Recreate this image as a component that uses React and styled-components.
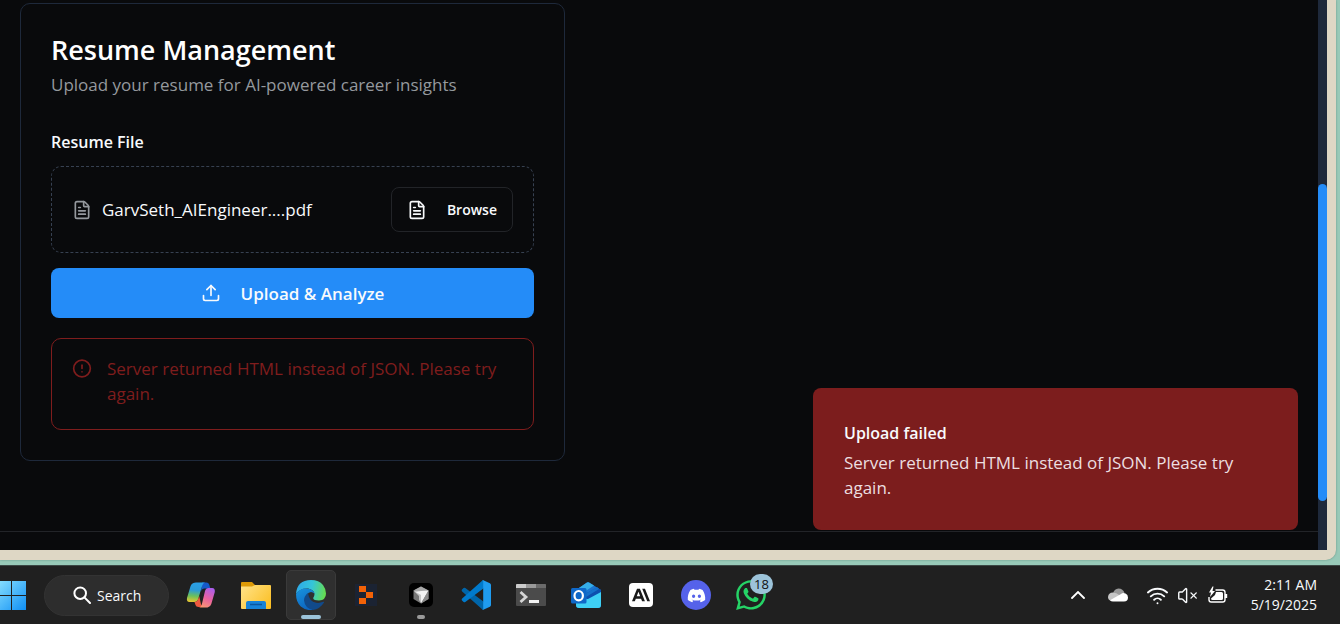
import React from "react";
import styled, { createGlobalStyle } from "styled-components";
import { FileText, Upload, CircleAlert, Wifi, VolumeX } from "lucide-react";
import { FaDiscord, FaWhatsapp } from "react-icons/fa";
import { SiAnthropic } from "react-icons/si";

const GlobalStyle = createGlobalStyle`
  *, *::before, *::after { box-sizing: border-box; }
  body {
    margin: 0;
    font-family: "Segoe UI", "Open Sans", "Noto Sans", sans-serif;
    color: #f8fafc;
    background: #98c9b8;
  }
  button, input { font: inherit; color: inherit; }
  h1, h2, p, ul { margin: 0; padding: 0; }
  svg { display: block; flex: none; }
`;

const Desktop = styled.div`
  display: flex;
  flex-direction: column;
  min-height: 100vh;
`;

const BrowserWindow = styled.div`
  display: flex;
  flex: 1;
  margin: 0 4px 5px 0;
  padding: 0 9px 10px 0;
  background: #ded7c5;
  border-bottom-right-radius: 10px;
  box-shadow: 0 0 2px rgba(40, 80, 70, 0.5);
`;

const Page = styled.div`
  position: relative;
  display: flex;
  flex: 1;
  flex-direction: column;
  background: #090a0c;
`;

const Main = styled.main`
  flex: 1;
  padding: 3px 20px 70px;
`;

const PageFooter = styled.footer`
  height: 19px;
  border-top: 1px solid #222428;
`;

const Card = styled.section`
  max-width: 545px;
  padding: 30px;
  border: 1px solid #1e293b;
  border-radius: 10px;
`;

const CardHeader = styled.header`
  display: grid;
  gap: 6px;
  margin-bottom: 30px;
`;

const CardTitle = styled.h1`
  font-size: 27px;
  font-weight: 600;
  line-height: 32px;
  color: #fff;
`;

const CardSubtitle = styled.p`
  font-size: 17px;
  line-height: 26px;
  color: #95999e;
`;

const FieldLabel = styled.label`
  display: block;
  margin-bottom: 10px;
  font-size: 16px;
  font-weight: 600;
  line-height: 28px;
`;

const FilePicker = styled.div`
  display: flex;
  align-items: center;
  justify-content: space-between;
  padding: 20px;
  border: 1px dashed #374151;
  border-radius: 10px;
`;

const FileName = styled.span`
  display: flex;
  align-items: center;
  gap: 10px;
  font-size: 17px;
  line-height: 26px;

  svg { color: #95999e; }
`;

const HiddenFile = styled.input`
  display: none;
`;

const BrowseButton = styled.button`
  display: flex;
  align-items: center;
  gap: 20px;
  height: 45px;
  padding: 0 15px;
  border: 1px solid #222428;
  border-radius: 8px;
  background: transparent;
  font-size: 14px;
  font-weight: 600;
  cursor: pointer;
`;

const UploadButton = styled.button`
  display: flex;
  align-items: center;
  justify-content: center;
  gap: 20px;
  width: 100%;
  height: 50px;
  margin: 15px 0 20px;
  padding: 0;
  border: 0;
  border-radius: 8px;
  background: #248cf8;
  font-size: 17px;
  font-weight: 600;
  cursor: pointer;
`;

const ErrorAlert = styled.div`
  display: flex;
  gap: 15px;
  padding: 17px 20px 23px;
  border: 1px solid #7f1d1d;
  border-radius: 10px;
  color: #7f1d1d;
  font-size: 17px;
  line-height: 25px;

  svg { height: 25px; }
`;

const Toast = styled.aside`
  position: absolute;
  right: 20px;
  bottom: 20px;
  width: 485px;
  padding: 32px 31px 30px;
  border-radius: 8px;
  background: #7c1d1d;
`;

const ToastTitle = styled.h2`
  margin-bottom: 4px;
  font-size: 16px;
  font-weight: 600;
  line-height: 26px;
`;

const ToastText = styled.p`
  font-size: 17px;
  line-height: 25px;
  color: #ecdfe0;
`;

const ScrollTrack = styled.div`
  display: grid;
  grid-template-rows: 184fr 317fr 49fr;
  width: 9px;
  background: #1e293b;
`;

const ScrollThumb = styled.div`
  grid-row: 2;
  border-radius: 5px;
  background: #248cf8;
`;

const Taskbar = styled.nav`
  display: flex;
  align-items: center;
  justify-content: space-between;
  height: 59px;
  padding-right: 23px;
  border-top: 1px solid #3b4744;
  background: #202020;
`;

const TaskbarGroup = styled.div`
  display: flex;
  align-items: center;
`;

const BareButton = styled.button`
  display: grid;
  place-items: center;
  padding: 0;
  border: 0;
  background: none;
`;

const SearchBox = styled.button`
  display: flex;
  align-items: center;
  gap: 6px;
  width: 125px;
  height: 41px;
  margin: 0 7px 0 18px;
  padding: 0 0 0 28px;
  border: 1px solid #333;
  border-radius: 21px;
  background: #2d2d2d;
  font-size: 14px;
`;

const AppList = styled.div`
  display: flex;
  gap: 5px;
`;

const AppButton = styled.button`
  position: relative;
  display: grid;
  place-items: center;
  width: 50px;
  height: 50px;
  padding: 0;
  border: 1px solid ${(p) => (p.$active ? "#3a3a3a" : "transparent")};
  border-radius: 5px;
  background: ${(p) => (p.$active ? "#2f2f2f" : "transparent")};
`;

const RunningMark = styled.span`
  position: absolute;
  bottom: 0;
  width: ${(p) => (p.$wide ? 20 : 8)}px;
  height: 4px;
  border-radius: 2px;
  background: ${(p) => (p.$wide ? "#9cc3d9" : "#9a9a9a")};
`;

const CountBadge = styled.span`
  position: absolute;
  top: 3px;
  right: 2px;
  width: 23px;
  height: 20px;
  border-radius: 10px;
  background: #9cc3d9;
  color: #111;
  font-size: 13px;
  line-height: 20px;
`;

const LogoTile = styled.span`
  display: grid;
  place-items: center;
  width: ${(p) => p.$size}px;
  height: ${(p) => p.$size}px;
  border-radius: ${(p) => p.$radius}px;
  background: ${(p) => p.$fill};
  color: ${(p) => p.$ink};
`;

const TrayButton = styled(BareButton)`
  width: ${(p) => (p.$wide ? 50 : 30)}px;
  height: 40px;
`;

const Clock = styled.time`
  margin-left: 18px;
  font-size: 14px;
  line-height: 20px;
  text-align: right;
`;

const StartLogo = () => (
  <svg width="26" height="30" viewBox="0 0 26 30" aria-hidden="true">
    <defs>
      <linearGradient id="start" x1="-4" y1="0" x2="26" y2="30" gradientUnits="userSpaceOnUse">
        <stop offset="0" stopColor="#8fe4ff" />
        <stop offset="1" stopColor="#0f8ff5" />
      </linearGradient>
    </defs>
    <path d="M0 1h11v14H0zM12 1h14v14H12zM0 16h11v14H0zM12 16h14v14H12z" fill="url(#start)" />
  </svg>
);

const SearchIcon = () => (
  <svg width="18" height="18" viewBox="0 0 18 18" fill="none" stroke="#fff" strokeWidth="2" aria-hidden="true">
    <circle cx="7.2" cy="7.2" r="5.8" />
    <path d="m11.4 11.4 5.6 5.6" strokeLinecap="round" />
  </svg>
);

const CopilotLogo = () => (
  <svg width="30" height="28" viewBox="0 0 30 28" aria-hidden="true">
    <defs>
      <linearGradient id="cpA" x1="8" y1="1" x2="6" y2="21" gradientUnits="userSpaceOnUse">
        <stop offset="0" stopColor="#2aa0e8" />
        <stop offset=".4" stopColor="#2b9bd8" />
        <stop offset=".7" stopColor="#6cc05b" />
        <stop offset="1" stopColor="#e9c630" />
      </linearGradient>
      <linearGradient id="cpB" x1="24" y1="6" x2="14" y2="27" gradientUnits="userSpaceOnUse">
        <stop offset="0" stopColor="#a75df0" />
        <stop offset=".5" stopColor="#e9629f" />
        <stop offset="1" stopColor="#ffa06a" />
      </linearGradient>
    </defs>
    <path d="M16 1.500h4.500q2 0 2.700 2l1.200 4H18q-2 0-2.800 2.500z" fill="#1559c9" />
    <path d="M7.500 2Q8.300 1.500 10 1.500h9q-2 .5-2.800 3l-4 13.500q-.9 3-3.700 3H3.500Q.3 21 1 17L4.600 5q.9-2.600 2.900-3z" fill="url(#cpA)" />
    <path d="M8.500 21q2.800 0 3.700-3l1-3 1.500 7q.5 3.500 2.300 4h-4.500q-2.500 0-3-2z" fill="#ef5940" />
    <path d="M22.500 26q-.8.500-2.500.5h-7q2-.5 2.800-3L19 10q.9-3 3.500-3h3.700q3 .2 2.600 4l-3.500 12q-.9 2.500-2.800 3z" fill="url(#cpB)" />
  </svg>
);

const ExplorerLogo = () => (
  <svg width="30" height="28" viewBox="0 0 30 28" aria-hidden="true">
    <defs>
      <linearGradient id="folder" x1="0" y1="4" x2="30" y2="28" gradientUnits="userSpaceOnUse">
        <stop offset="0" stopColor="#ffe38a" />
        <stop offset="1" stopColor="#fbbd1e" />
      </linearGradient>
    </defs>
    <path d="M0 2q0-1 1-1h10l3 3h15v8H0z" fill="#dd9a07" />
    <path d="M0 5.500h11L14 4h15q1 0 1 1v22q0 1-1 1H1q-1 0-1-1z" fill="url(#folder)" />
    <path d="M5 28v-6q0-2 2-2h16q2 0 2 2v6z" fill="#1683d8" />
    <path d="M9 23.500h12" stroke="#0b579e" strokeWidth="1.500" />
  </svg>
);

const EdgeLogo = () => (
  <svg width="30" height="30" viewBox="0 0 30 30" aria-hidden="true">
    <defs>
      <linearGradient id="edTop" x1="1" y1="8" x2="29" y2="14" gradientUnits="userSpaceOnUse">
        <stop offset="0" stopColor="#2eabe8" />
        <stop offset=".5" stopColor="#35c5d8" />
        <stop offset="1" stopColor="#65dc50" />
      </linearGradient>
      <linearGradient id="edLow" x1="2" y1="9" x2="14" y2="30" gradientUnits="userSpaceOnUse">
        <stop offset="0" stopColor="#1791dc" />
        <stop offset="1" stopColor="#0c61bd" />
      </linearGradient>
    </defs>
    <path d="M0 14Q1 0 15 0q8 0 12 5 3 4 3 8.500 0 6.500-7 7-5.500 0-5.800-2.200c0-1.200 1.300-1.800 1.300-4.300 0-3-3.500-5.500-8-5.500Q4 8.500 0 14z" fill="url(#edTop)" />
    <path d="M0 14Q4 8 10.500 8.500c4.500.3 8 2.500 8 5.500-.5-1-2-2-3.500-2q-5 1-5 7 0 7 7 10.900Q10 31 4.800 26.500 0 22 0 14z" fill="url(#edLow)" />
    <path d="M12 13q-4 3-4 7.500 1 8 9 9.400 7-.8 11-7.400.3-1-.8-.7-3.200 1.500-7 1-7-1-8.200-9.800z" fill="#114a8b" />
  </svg>
);

const PixelArrowLogo = () => (
  <svg width="22" height="22" viewBox="0 0 22 22" aria-hidden="true">
    <path d="M0 0h22v22H0z" fill="#1b2333" />
    <path d="M4 2h7v6H4zM11 8h7v6h-7zM4 14h7v6H4z" fill="#f26207" />
  </svg>
);

const CursorLogo = () => (
  <svg width="24" height="24" viewBox="0 0 24 24" aria-hidden="true">
    <rect width="24" height="24" rx="5" fill="#000" />
    <path d="m12 3.500 7.500 4v8.500L12 20.500 4.500 16V7.500z" fill="#777" />
    <path d="m12 3.500 7.500 4L12 9 4.500 7.500z" fill="#a8a8a8" />
    <path d="m4.500 7.500 7.500 4V20l-2-3v-4z" fill="#c4c4c4" />
    <path d="m5.500 8.500 14-1L12 20.500V12z" fill="#f2f2f2" />
    <path d="M12 20.500 19.500 7.500V16z" fill="#8b8b8b" />
  </svg>
);

const VsCodeLogo = () => (
  <svg width="30" height="30" viewBox="0 0 30 30" aria-hidden="true">
    <path d="m1 9.600 1.600-1.500q.8-.7 1.700 0L25 23.500 22 30 .900 11.200q-.6-.9.100-1.600z" fill="#0065a9" />
    <path d="m1 20.400 1.600 1.500q.8.700 1.700 0L25 6.500 22 0 .900 18.800q-.6.900.1 1.600z" fill="#007acc" />
    <path d="M22.300 29.800q-.9.300-1.600-.4 1.500 1 1.500-1.200V1.800q0-2.200-1.500-1.200.7-.7 1.600-.4l6.600 3Q30 3.700 30 5v20q0 1.300-1.100 1.800z" fill="#1f9cf0" />
  </svg>
);

const TerminalLogo = () => (
  <svg width="30" height="22" viewBox="0 0 30 22" aria-hidden="true">
    <rect width="30" height="22" rx="1" fill="#4b4b4b" />
    <path d="M0 1q0-1 1-1h9v4H0z" fill="#ccc" />
    <path d="M10 0h10v4H10z" fill="#999" />
    <path d="M20 0h9q1 0 1 1v3H20z" fill="#6b6b6b" />
    <path d="m4.500 8 5.500 5-5.500 5" fill="none" stroke="#d6d6d6" strokeWidth="2.800" />
    <path d="M13 16h10v3H13z" fill="#f4f4f4" />
  </svg>
);

const OutlookLogo = () => (
  <svg width="30" height="26" viewBox="0 0 30 26" aria-hidden="true">
    <path d="M5 8 16 .5q1-.6 2 0L30 8v15q0 3-3 3H8q-3 0-3-3z" fill="#1c75d0" />
    <path d="M5 8 16 .5q1-.6 2 0l5 3L10 12z" fill="#35aee8" />
    <path d="M12 13 26 5.500 30 8v3L17 18z" fill="#0d4fae" />
    <path d="M5 17l12 0 13-7v13q0 3-3 3H8q-3 0-3-3z" fill="#3ed0f5" />
    <path d="M14 12 26 5l2 2-13 8z" fill="#1570c9" />
    <rect y="6" width="15.500" height="15.500" rx="1.500" fill="#0f68c8" />
    <ellipse cx="7.700" cy="13.700" rx="4.200" ry="4.700" fill="none" stroke="#fff" strokeWidth="2.200" />
  </svg>
);

const ChevronUpIcon = () => (
  <svg width="14" height="8" viewBox="0 0 14 8" aria-hidden="true">
    <path d="m1 7 6-6 6 6" fill="none" stroke="#fff" strokeWidth="1.800" strokeLinecap="round" />
  </svg>
);

const CloudIcon = () => (
  <svg width="20" height="14" viewBox="0 0 20 14" aria-hidden="true">
    <path d="M5 5.500Q6 1 10.500.5q4.500 0 6 4.500L11 8z" fill="#9a9a9a" />
    <path d="M0 9q.4-4.500 5-4.500Q8 4.500 12 7.500L3 12.800Q0 12 0 9z" fill="#c6c6c6" />
    <path d="M2 12.300 13 6q2-1.600 4.500-.5 2.500 1.200 2.500 4 0 4-4 4H5q-2 0-3-1.200z" fill="#fff" />
  </svg>
);

const BatteryIcon = () => (
  <svg width="20" height="18" viewBox="0 0 20 18" fill="none" stroke="#fff" strokeWidth="1.400" aria-hidden="true">
    <path d="M7.500 4h7.200q2.300 0 2.300 2.300v7.400q0 2.300-2.300 2.300H3.200Q1 16 1 13.700V11" />
    <path d="M8 6h5.500q1.500 0 1.500 1.500v5q0 1.500-1.500 1.500H4.500Q3 14 3 12.500L7 9z" fill="#fff" stroke="none" />
    <path d="M18 8v4" strokeWidth="2.400" />
    <path d="M4.500.5 1 6.500h2L2 11l5-6H4.500l1-4.500z" fill="#fff" stroke="none" />
  </svg>
);

const AnthropicTile = () => (
  <LogoTile $size={24} $radius={4} $fill="#fff" $ink="#191919">
    <SiAnthropic size={18} />
  </LogoTile>
);

const DiscordTile = () => (
  <LogoTile $size={30} $radius={15} $fill="#5562ea" $ink="#fff">
    <FaDiscord size={19} />
  </LogoTile>
);

const WhatsAppLogo = () => <FaWhatsapp size={34} color="#25d366" />;

const APPS = [
  { name: "Copilot", Logo: CopilotLogo },
  { name: "File Explorer", Logo: ExplorerLogo },
  { name: "Microsoft Edge", Logo: EdgeLogo, active: true },
  { name: "Replit", Logo: PixelArrowLogo },
  { name: "Cursor", Logo: CursorLogo, running: true },
  { name: "Visual Studio Code", Logo: VsCodeLogo },
  { name: "Terminal", Logo: TerminalLogo },
  { name: "Outlook", Logo: OutlookLogo },
  { name: "Claude", Logo: AnthropicTile },
  { name: "Discord", Logo: DiscordTile },
  { name: "WhatsApp", Logo: WhatsAppLogo, count: 18 },
];

const ERROR_TEXT = "Server returned HTML instead of JSON. Please try again.";

function ResumeCard() {
  return (
    <Card>
      <CardHeader>
        <CardTitle>Resume Management</CardTitle>
        <CardSubtitle>Upload your resume for AI-powered career insights</CardSubtitle>
      </CardHeader>
      <FieldLabel htmlFor="resume">Resume File</FieldLabel>
      <FilePicker>
        <HiddenFile id="resume" type="file" accept=".pdf" />
        <FileName>
          <FileText size={20} />
          GarvSeth_AIEngineer....pdf
        </FileName>
        <BrowseButton type="button">
          <FileText size={20} />
          Browse
        </BrowseButton>
      </FilePicker>
      <UploadButton type="button">
        <Upload size={20} />
        Upload &amp; Analyze
      </UploadButton>
      <ErrorAlert role="alert">
        <CircleAlert size={20} />
        <p>{ERROR_TEXT}</p>
      </ErrorAlert>
    </Card>
  );
}

function SystemTaskbar() {
  return (
    <Taskbar aria-label="Taskbar">
      <TaskbarGroup>
        <BareButton aria-label="Start"><StartLogo /></BareButton>
        <SearchBox><SearchIcon />Search</SearchBox>
        <AppList>
          {APPS.map(({ name, Logo, active, running, count }) => (
            <AppButton key={name} aria-label={name} $active={active}>
              <Logo />
              {(active || running) && <RunningMark $wide={active} />}
              {count && <CountBadge>{count}</CountBadge>}
            </AppButton>
          ))}
        </AppList>
      </TaskbarGroup>
      <TaskbarGroup>
        <TrayButton aria-label="Show hidden icons"><ChevronUpIcon /></TrayButton>
        <TrayButton aria-label="OneDrive" $wide><CloudIcon /></TrayButton>
        <TrayButton aria-label="Network"><Wifi size={23} /></TrayButton>
        <TrayButton aria-label="Volume"><VolumeX size={21} strokeWidth={1.6} /></TrayButton>
        <TrayButton aria-label="Battery"><BatteryIcon /></TrayButton>
        <Clock dateTime="2025-05-19T02:11">2:11 AM<br />5/19/2025</Clock>
      </TaskbarGroup>
    </Taskbar>
  );
}

export default function App() {
  return (
    <Desktop>
      <GlobalStyle />
      <BrowserWindow>
        <Page>
          <Main><ResumeCard /></Main>
          <PageFooter />
          <Toast role="status">
            <ToastTitle>Upload failed</ToastTitle>
            <ToastText>{ERROR_TEXT}</ToastText>
          </Toast>
        </Page>
        <ScrollTrack><ScrollThumb /></ScrollTrack>
      </BrowserWindow>
      <SystemTaskbar />
    </Desktop>
  );
}
